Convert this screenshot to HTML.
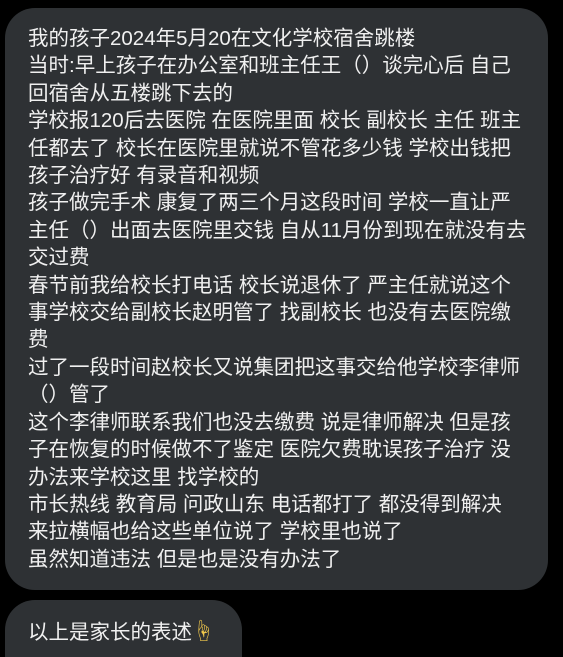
<!DOCTYPE html>
<html><head><meta charset="utf-8"><style>
html,body{margin:0;padding:0;background:#000;width:563px;height:657px;overflow:hidden;position:relative}
.b{position:absolute;background:#2e3134;color:#f0f0f0;font-family:"Liberation Sans","Noto Sans CJK SC",sans-serif;font-size:20.5px;white-space:nowrap}
#b1{left:5px;top:8px;width:543px;height:582px;border-radius:30px}
#t1{position:absolute;left:23px;top:17px;line-height:27.4px}
#b2{left:5px;top:600px;width:237px;height:57px;border-radius:30px 30px 0 0}
#t2{position:absolute;left:23px;top:20px;line-height:24px}
</style></head><body>
<div class="b" id="b1"><div id="t1">我的孩子2024年5月20在文化学校宿舍跳楼<br>当时:早上孩子在办公室和班主任王（）谈完心后 自己<br>回宿舍从五楼跳下去的<br>学校报120后去医院 在医院里面 校长 副校长 主任 班主<br>任都去了 校长在医院里就说不管花多少钱 学校出钱把<br>孩子治疗好 有录音和视频<br>孩子做完手术 康复了两三个月这段时间 学校一直让严<br>主任（）出面去医院里交钱 自从11月份到现在就没有去<br>交过费<br>春节前我给校长打电话 校长说退休了 严主任就说这个<br>事学校交给副校长赵明管了 找副校长 也没有去医院缴<br>费<br>过了一段时间赵校长又说集团把这事交给他学校李律师<br>（）管了<br>这个李律师联系我们也没去缴费 说是律师解决 但是孩<br>子在恢复的时候做不了鉴定 医院欠费耽误孩子治疗 没<br>办法来学校这里 找学校的<br>市长热线 教育局 问政山东 电话都打了 都没得到解决<br>来拉横幅也给这些单位说了 学校里也说了<br>虽然知道违法 但是也是没有办法了</div></div>
<div class="b" id="b2"><div id="t2">以上是家长的表述<span style="color:#f2c94c;font-size:22px">☝</span></div></div>
</body></html>
